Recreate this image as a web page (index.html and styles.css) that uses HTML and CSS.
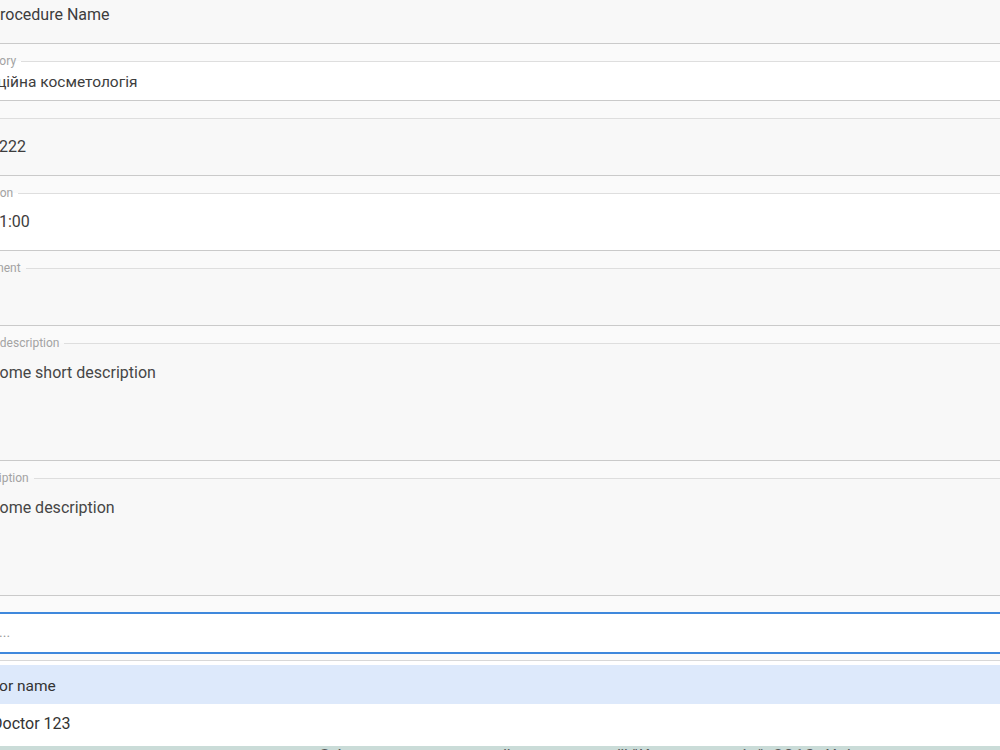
FILE: index.html
```html
<!DOCTYPE html>
<html lang="uk">
<head>
<meta charset="utf-8">
<title>Procedure</title>
<link rel="stylesheet" href="styles.css">
</head>
<body>
<div class="form">
  <fieldset class="field">
    <legend>Name</legend>
    <div class="value">Procedure Name</div>
  </fieldset>
  <fieldset class="field field-white field-select">
    <legend>Category</legend>
    <div class="value">Ін'єкційна косметологія</div>
  </fieldset>
  <fieldset class="field">
    <legend>Price</legend>
    <div class="value">1222</div>
  </fieldset>
  <fieldset class="field field-white">
    <legend>Duration</legend>
    <div class="value">01:00</div>
  </fieldset>
  <fieldset class="field">
    <legend>Comment</legend>
    <div class="value"></div>
  </fieldset>
  <fieldset class="field field-area">
    <legend>Short description</legend>
    <div class="value">Some short description</div>
  </fieldset>
  <fieldset class="field field-area">
    <legend>Description</legend>
    <div class="value">Some description</div>
  </fieldset>
  <div class="search"><span class="placeholder">Search...</span></div>
  <div class="dropdown">
    <div class="opt opt-head">Doctor name</div>
    <div class="opt">Doctor 123</div>
  </div>
</div>
<footer class="footer">© Інститут естетичної косметології "Косметологія", 2013. Усі права захищено</footer>
</body>
</html>
```
FILE: styles.css
```css
html, body {
  margin: 0;
  padding: 0;
  background: #fafafa;
  overflow: hidden;
}
body {
  font-family: Roboto, "Liberation Sans", sans-serif;
  color: #3a3a3a;
  width: 1000px;
  height: 750px;
}
.form {
  margin-left: -45px;
  margin-top: -21px;
}
.field {
  margin: 0 0 10px 0;
  padding: 0;
  min-width: 0;
  border: 0;
  border-top: 1px solid #dedede;
  border-bottom: 1px solid #cacaca;
  background: #f8f8f8;
}
.field legend {
  margin-left: 8px;
  padding: 0 5px;
  font-size: 12px;
  line-height: 14px;
  color: #a3a3a3;
}
.field-white {
  background: #ffffff;
}
.value {
  padding: 12px 0 18px 35px;
  font-size: 16px;
  line-height: 20px;
  height: 20px;
  color: #3d3d3d;
  white-space: nowrap;
}
.field-select .value {
  padding: 4px 0 8px 10px;
  font-size: 15.5px;
}
.field-area .value {
  padding: 13px 0 77px 35px;
  color: #464646;
}
.search {
  margin-top: 16px;
  border-top: 2px solid #3f88dc;
  border-bottom: 2px solid #3f88dc;
  background: #ffffff;
  padding: 8px 0 10px 1px;
  line-height: 20px;
  height: 20px;
}
.placeholder {
  font-size: 14px;
  color: #9a9a9a;
}
.dropdown {
  margin-top: 6px;
  border-top: 1px solid #d8d8d8;
  background: #ffffff;
  padding-top: 4px;
}
.opt {
  padding: 10px 0 12px 37px;
  font-size: 16px;
  line-height: 20px;
  height: 20px;
  color: #333;
}
.opt-head {
  background: #dde9fb;
  padding: 11px 0 8px 12px;
  font-size: 15.5px;
}
.footer {
  background: #cadcd8;
  color: #555;
  font-family: Roboto, "Liberation Sans", sans-serif;
  font-size: 17px;
  letter-spacing: 0.9px;
  line-height: 18px;
  padding: 0 0 20px 318px;
  white-space: nowrap;
  overflow: hidden;
}
```
